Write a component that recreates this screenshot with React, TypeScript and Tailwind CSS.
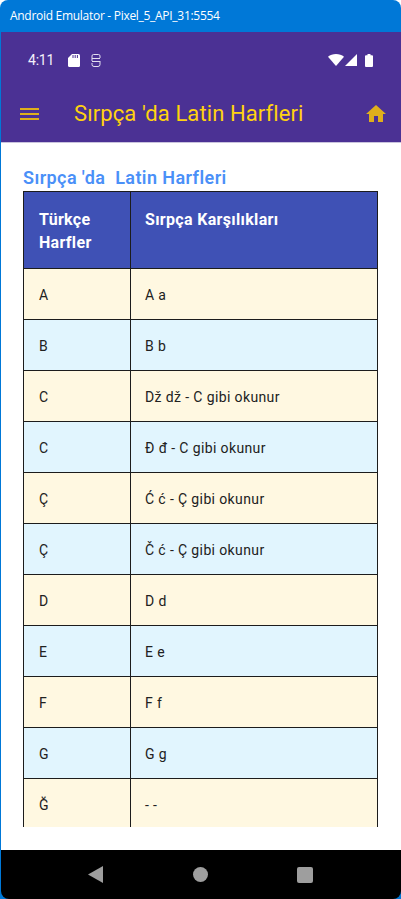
const rows = [
  ['A', 'A a'],
  ['B', 'B b'],
  ['C', 'Dž dž - C gibi okunur'],
  ['C', 'Đ đ - C gibi okunur'],
  ['Ç', 'Ć ć - Ç gibi okunur'],
  ['Ç', 'Č ć - Ç gibi okunur'],
  ['D', 'D d'],
  ['E', 'E e'],
  ['F', 'F f'],
  ['G', 'G g'],
  ['Ğ', '- -'],
];

function StatusBar() {
  return (
    <div className="flex h-[56px] items-center pl-[27px] pr-[28px] text-[#f3f0fa]">
      <span className="w-[40px] text-[14px] leading-none tracking-[-0.2px]">4:11</span>
      <svg width="12" height="13" viewBox="0 0 12 13" className="mr-[11px]">
        <path d="M4 0h6.5A1.5 1.5 0 0 1 12 1.5v10a1.5 1.5 0 0 1-1.5 1.5h-9A1.5 1.5 0 0 1 0 11.5V4z" fill="#fff" />
        <path d="M5 1v3M7.2 1v3M9.4 1v3" stroke="#4b3194" strokeWidth="1" />
      </svg>
      <svg width="10" height="13" viewBox="0 0 10 13" fill="none" stroke="#e4e0f0" strokeWidth="1">
        <path d="M1 4V2a1.5 1.5 0 0 1 1.5-1.5h5A1.5 1.5 0 0 1 9 2v2" />
        <path d="M1 4.5h8M1 7.5h8" />
        <path d="M1 9v1.5A2 2 0 0 0 3 12.5h4a2 2 0 0 0 2-2V7" />
        <path d="M1 4v3" />
      </svg>
      <div className="ml-auto flex items-center">
        <svg width="16" height="12" viewBox="0 0 16 12" className="mr-[1px]">
          <path d="M0 2.8C2 1 5 0 8 0s6 1 8 2.8L8 12z" fill="#fff" />
        </svg>
        <svg width="12" height="12" viewBox="0 0 12 12" className="mr-[8px]">
          <path d="M12 0v12H0z" fill="#fff" />
        </svg>
        <svg width="8" height="13" viewBox="0 0 8 13">
          <path d="M2.5 0h3v1.2H7a1 1 0 0 1 1 1V12a1 1 0 0 1-1 1H1a1 1 0 0 1-1-1V2.2a1 1 0 0 1 1-1h1.5z" fill="#fff" />
        </svg>
      </div>
    </div>
  );
}

function AppBar() {
  return (
    <div className="flex h-[51px] items-center pl-[19px] pr-[15px]">
      <svg width="19" height="12" viewBox="0 0 19 12" className="mr-[35px]">
        <path d="M0 1h19M0 6h19M0 11h19" stroke="#dfae1c" strokeWidth="2" />
      </svg>
      <h1 className="text-[22px] leading-none tracking-[0.1px] whitespace-nowrap text-[#ffd20f]">
        Sırpça 'da Latin Harfleri
      </h1>
      <svg width="20" height="17" viewBox="0 0 20 17" className="ml-auto">
        <path d="M10 0 20 9h-3v8h-5v-6H8v6H3V9H0z" fill="#dfae1c" />
      </svg>
    </div>
  );
}

function NavBar() {
  return (
    <div className="flex h-[49px] shrink-0 items-center rounded-b-lg bg-black pl-[87px]">
      <svg width="15" height="17" viewBox="0 0 15 17">
        <path d="M15 0v17L0 8.5z" fill="#9e9e9e" />
      </svg>
      <div className="ml-[90px] h-[15px] w-[15px] rounded-full bg-[#9e9e9e]" />
      <div className="ml-[89px] h-[16px] w-[16px] rounded-[2px] bg-[#9e9e9e]" />
    </div>
  );
}

export default function App() {
  return (
    <div className="flex h-[899px] w-[401px] flex-col overflow-hidden rounded-t-lg bg-[#0078d7] font-['Roboto',sans-serif]">
      <div className="flex h-[32px] shrink-0 items-center pl-[10px] font-['Open_Sans',sans-serif] text-[12px] tracking-[-0.29px] text-white">
        Android Emulator - Pixel_5_API_31:5554
      </div>
      <div className="flex min-h-0 flex-1 flex-col border-l border-[#0078d7]">
        <div className="h-[111px] shrink-0 border-b border-[#c9c3dd] bg-[#4b3194]">
          <StatusBar />
          <AppBar />
        </div>
        <div className="flex min-h-0 flex-1 flex-col bg-white pb-[23px] pl-[22px] pr-[23px] pt-[24px]">
          <h2 className="mb-[3px] h-[21px] text-[18px] leading-[21px] font-semibold tracking-[0.42px] whitespace-pre text-[#4a90f8]">
            Sırpça 'da  Latin Harfleri
          </h2>
          <div className="min-h-0 flex-1 overflow-hidden border-x border-t border-[#1c1c1c]">
            <div className="flex h-[77px] border-b border-[#1c1c1c] bg-[#3f51b5] text-[16px] leading-[23px] font-bold tracking-[0.32px] text-white">
              <div className="w-[107px] shrink-0 border-r border-[#1c1c1c] pl-[15px] pt-[16px]">
                Türkçe
                <br />
                Harfler
              </div>
              <div className="pl-[14px] pt-[16px]">Sırpça Karşılıkları</div>
            </div>
            {rows.map(([letter, value], i) => (
              <div
                key={i}
                className={`flex h-[51px] border-b border-[#1c1c1c] text-[14px] tracking-[0.38px] text-[#212121] ${i % 2 === 0 ? 'bg-[#fff8e1]' : 'bg-[#e1f5fe]'}`}
              >
                <div className="flex w-[107px] shrink-0 items-center border-r border-[#1c1c1c] pl-[15px] pt-[2px]">{letter}</div>
                <div className="flex items-center pl-[14px] pt-[2px]">{value}</div>
              </div>
            ))}
          </div>
        </div>
        <NavBar />
      </div>
    </div>
  );
}
